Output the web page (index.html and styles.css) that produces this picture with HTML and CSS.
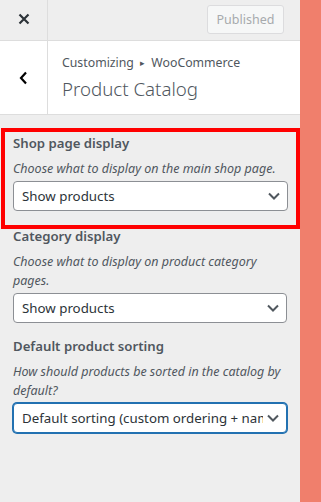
FILE: index.html
```html
<!DOCTYPE html>
<html lang="en">
<head>
    <meta charset="UTF-8">
    <meta name="viewport" content="width=device-width, initial-scale=1.0">
    <title>Customizing - Product Catalog</title>
    <link rel="stylesheet" href="styles.css">
</head>
<body>
    <div class="page">
        <div class="sidebar">
            <div class="topbar">
                <div class="close-btn">
                    <svg width="12" height="12" viewBox="0 0 12 12"><path d="M1.5 1.5 L10.5 10.5 M10.5 1.5 L1.5 10.5" stroke="#2c3338" stroke-width="2.2" fill="none"/></svg>
                </div>
                <div class="topbar-actions">
                    <button class="publish-btn">Published</button>
                </div>
            </div>
            <div class="section-head">
                <div class="back-btn">
                    <svg width="9" height="14" viewBox="0 0 9 14"><path d="M7 1.5 L2 7 L7 12.5" stroke="#000" stroke-width="2.2" fill="none"/></svg>
                </div>
                <div class="section-title">
                    <div class="crumbs">Customizing <span class="crumb-sep">&#9656;</span> WooCommerce</div>
                    <h2>Product Catalog</h2>
                </div>
            </div>
            <div class="controls">
                <div class="control highlight">
                    <div class="control-title">Shop page display</div>
                    <div class="control-desc">Choose what to display on the main shop page.</div>
                    <div class="select">
                        <span>Show products</span>
                        <svg width="12" height="8" viewBox="0 0 12 8"><path d="M1 1.5 L6 6.5 L11 1.5" stroke="#50575e" stroke-width="2" fill="none"/></svg>
                    </div>
                </div>
                <div class="control">
                    <div class="control-title">Category display</div>
                    <div class="control-desc">Choose what to display on product category pages.</div>
                    <div class="select">
                        <span>Show products</span>
                        <svg width="12" height="8" viewBox="0 0 12 8"><path d="M1 1.5 L6 6.5 L11 1.5" stroke="#50575e" stroke-width="2" fill="none"/></svg>
                    </div>
                </div>
                <div class="control">
                    <div class="control-title">Default product sorting</div>
                    <div class="control-desc">How should products be sorted in the catalog by default?</div>
                    <div class="select focused">
                        <span>Default sorting (custom ordering + name)</span>
                        <svg width="12" height="8" viewBox="0 0 12 8"><path d="M1 1.5 L6 6.5 L11 1.5" stroke="#50575e" stroke-width="2" fill="none"/></svg>
                    </div>
                </div>
            </div>
        </div>
        <div class="preview"></div>
    </div>
</body>
</html>
```

FILE: styles.css
```css
body {
    margin: 0;
    font-family: 'Noto Sans', 'Open Sans', sans-serif;
    color: #50575e;
    background-color: #f07f6c;
}
.page {
    display: flex;
    height: 502px;
}
.sidebar {
    width: 300px;
    background-color: #eeeeee;
    display: flex;
    flex-direction: column;
}
.preview {
    flex: 1;
    background-color: #f07f6c;
}
.topbar {
    display: flex;
    height: 40px;
    border-bottom: 1px solid #dddddd;
}
.close-btn {
    width: 47px;
    border-right: 1px solid #dddddd;
    display: flex;
    align-items: center;
    justify-content: center;
    padding-bottom: 3px;
}
.topbar-actions {
    flex: 1;
    display: flex;
    justify-content: flex-end;
    align-items: center;
    padding-right: 16px;
}
.publish-btn {
    font-family: inherit;
    font-size: 12.5px;
    color: #a7aaad;
    background-color: #f6f7f7;
    border: 1px solid #dcdcde;
    border-radius: 3px;
    height: 29px;
    width: 77px;
    padding: 0;
    margin-top: -1px;
}
.section-head {
    display: flex;
    background-color: #ffffff;
    height: 73px;
    border-bottom: 1px solid #dddddd;
}
.back-btn {
    width: 47px;
    border-right: 1px solid #dddddd;
    display: flex;
    align-items: center;
    justify-content: center;
}
.section-title {
    padding: 12px 14px;
}
.crumbs {
    font-size: 12.3px;
    color: #50575e;
    line-height: 20px;
}
.crumb-sep {
    font-size: 9px;
    vertical-align: 1px;
    margin: 0 3px;
}
.section-title h2 {
    margin: 3px 0 0;
    font-size: 18.7px;
    font-weight: 300;
    line-height: 26px;
    color: #50575e;
}
.controls {
    padding: 13px 12px;
    display: flex;
    flex-direction: column;
}
.control {
    padding: 0 1px 13px;
}
.control.highlight {
    border: 4px solid #ff0000;
    margin: 0 -12px -3px -11px;
    padding: 1px 8px 14px 8px;
}
.control-title {
    font-size: 13.2px;
    font-weight: 600;
    line-height: 20px;
    color: #50575e;
}
.control-desc {
    font-size: 12.5px;
    font-style: italic;
    line-height: 19px;
    margin: 6px 0 3px;
    color: #50575e;
}
.select {
    box-sizing: border-box;
    height: 30px;
    background-color: #ffffff;
    border: 1px solid #8c8f94;
    border-radius: 4px;
    display: flex;
    align-items: center;
    padding: 0 7px 0 8px;
    font-size: 13.3px;
    color: #2c3338;
}
.select span {
    flex: 1;
    white-space: nowrap;
    overflow: hidden;
}
.select svg {
    flex-shrink: 0;
    margin-left: 4px;
}
.select.focused {
    border-color: #2271b1;
    box-shadow: 0 0 0 1px #2271b1;
}
```
